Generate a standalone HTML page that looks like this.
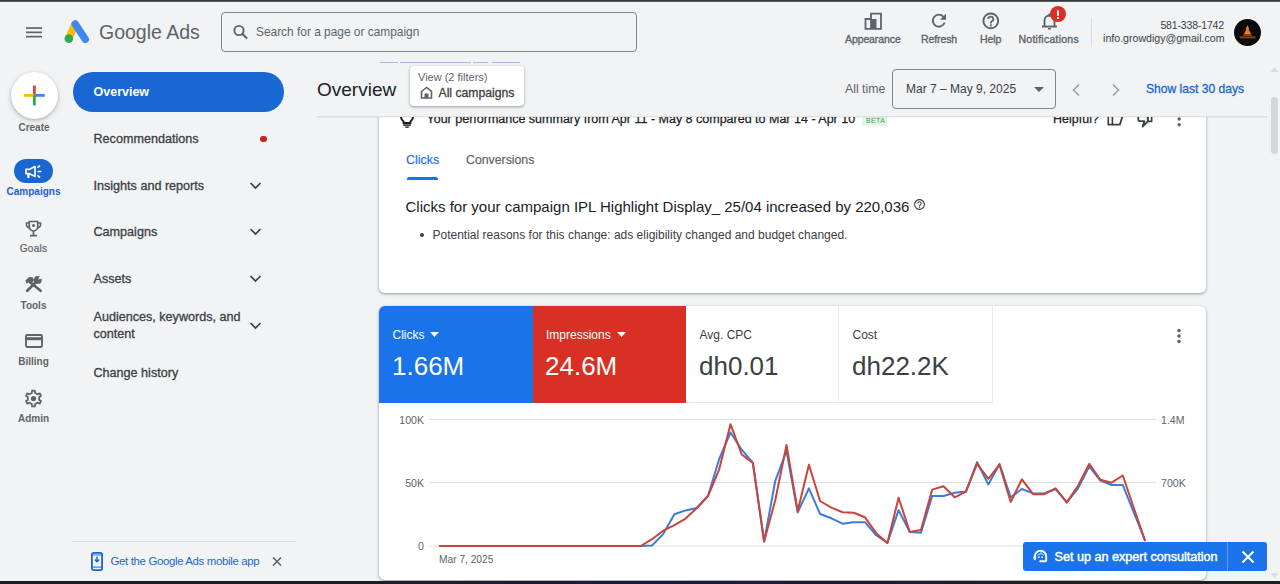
<!DOCTYPE html>
<html><head><meta charset="utf-8">
<style>
*{box-sizing:border-box;margin:0;padding:0}
html,body{width:1280px;height:584px;overflow:hidden;background:#f1f3f4;font-family:"Liberation Sans",sans-serif;color:#202124}
.abs{position:absolute}
.t{position:absolute;white-space:nowrap;line-height:1}
#topbar{position:absolute;left:0;top:0;width:1280px;height:2px;background:linear-gradient(#36373a 0,#36373a 55%,#8a8b8e 100%)}
#botbar{position:absolute;left:0;top:581px;width:1280px;height:3px;background:linear-gradient(to right,#1b1e25 0%,#1b1e28 35%,#161a3e 50%,#171b36 62%,#1c1f26 80%,#1c1f24 100%)}
.hlab{font-size:10.5px;color:#5f6368;font-weight:normal;letter-spacing:-0.1px;-webkit-text-stroke:0.35px #5f6368}
.rlab{font-size:10px;color:#5f6368;font-weight:bold;letter-spacing:0px}
.nav{font-size:12.6px;color:#3c4043;-webkit-text-stroke:0.3px #3c4043}
.card{position:absolute;background:#fff;border-radius:6px;box-shadow:0 1px 2px rgba(60,64,67,.3),0 1px 3px 1px rgba(60,64,67,.15)}
</style></head><body>
<div id="topbar"></div>

<!-- ================= HEADER ================= -->
<svg class="abs" style="left:26px;top:27px" width="16" height="11" viewBox="0 0 16 11"><rect x="0" y="0.2" width="16" height="1.7" fill="#5f6368"/><rect x="0" y="4.5" width="16" height="1.7" fill="#5f6368"/><rect x="0" y="8.8" width="16" height="1.7" fill="#5f6368"/></svg>
<svg class="abs" style="left:63px;top:19px" width="28" height="26" viewBox="0 0 28 26">
 <line x1="11.8" y1="5.5" x2="5.8" y2="19.5" stroke="#fbbc04" stroke-width="7.4" stroke-linecap="round"/>
 <line x1="12.2" y1="5" x2="22.3" y2="20.3" stroke="#4285f4" stroke-width="7.4" stroke-linecap="round"/>
 <circle cx="5.8" cy="19.6" r="4.3" fill="#34a853"/>
</svg>
<div class="t" style="left:99px;top:22.5px;font-size:19.5px;color:#5f6368">Google Ads</div>

<div class="abs" style="left:220.5px;top:12px;width:416.5px;height:39.5px;border:1px solid #80868b;border-radius:4px"></div>
<svg class="abs" style="left:232px;top:24px" width="17" height="16" viewBox="0 0 17 16"><circle cx="7" cy="6.5" r="4.6" fill="none" stroke="#5f6368" stroke-width="1.9"/><path d="M10.3 9.8L15 14.6" stroke="#5f6368" stroke-width="2.1"/></svg>
<div class="t" style="left:256px;top:26.8px;font-size:11.9px;color:#5f6368">Search for a page or campaign</div>

<!-- header actions -->
<svg class="abs" style="left:864px;top:12px" width="18" height="18" viewBox="0 0 18 18"><path fill="none" stroke="#5f6368" stroke-width="1.8" d="M1.5 7v9.9h5.5V7zM7 1.7h10v15.2H7z"/><rect x="7" y="7" width="5.5" height="9.5" fill="#5f6368"/></svg>
<div class="t hlab" style="left:845px;top:34.3px">Appearance</div>
<svg class="abs" style="left:931px;top:13px" width="16" height="15" viewBox="0 0 16 15"><path d="M12.3 3.6A6 6 0 1 0 13.6 9.5" fill="none" stroke="#5f6368" stroke-width="1.9"/><path d="M15 0.8v6H9z" fill="#5f6368"/></svg>
<div class="t hlab" style="left:921px;top:34.3px">Refresh</div>
<svg class="abs" style="left:981px;top:11px" width="20" height="20" viewBox="0 0 20 20"><circle cx="9.8" cy="9.9" r="7.4" fill="none" stroke="#5f6368" stroke-width="1.9"/><path d="M7.3 8.1a2.5 2.5 0 1 1 3.6 2.2c-.8.4-1.1.9-1.1 1.8v.3" fill="none" stroke="#5f6368" stroke-width="1.8"/><rect x="8.9" y="13.4" width="1.9" height="1.9" fill="#5f6368"/></svg>
<div class="t hlab" style="left:980px;top:34.3px">Help</div>
<svg class="abs" style="left:1041px;top:12px" width="17" height="18" viewBox="0 0 17 18"><path d="M3.5 14V8.5a5 5 0 0 1 10 0V14" fill="none" stroke="#5f6368" stroke-width="1.9"/><rect x="1" y="13.6" width="15" height="1.9" fill="#5f6368"/><rect x="6.8" y="16" width="3.4" height="1.5" rx=".7" fill="#5f6368"/><rect x="7.6" y="1.5" width="1.8" height="3" fill="#5f6368"/></svg>
<div class="abs" style="left:1050px;top:6px;width:16px;height:16px;border-radius:50%;background:#d93025"></div>
<div class="abs" style="left:1057px;top:10.3px;width:2px;height:5.4px;background:#fff;border-radius:1px"></div>
<div class="abs" style="left:1057px;top:16.9px;width:2px;height:2px;background:#fff"></div>
<div class="t hlab" style="left:1018.5px;top:34.3px;letter-spacing:0.25px">Notifications</div>
<div class="abs" style="left:1091px;top:18px;width:1px;height:29px;background:#dcdee1"></div>
<div class="t" style="left:1100px;top:20px;width:124px;text-align:right;font-size:10.5px;letter-spacing:-0.15px;color:#3c4043">581-338-1742</div>
<div class="t" style="left:1090px;top:33.2px;width:134.5px;text-align:right;font-size:10.6px;color:#3c4043">info.growdigy@gmail.com</div>
<div class="abs" style="left:1234px;top:19px;width:27px;height:27px;border-radius:50%;background:#0a0a0a"></div>
<svg class="abs" style="left:1234px;top:19px" width="27" height="27" viewBox="0 0 27 27"><path fill="#f47a20" d="M13.5 6L15.3 10.3L14.5 10.3L17.3 15.6L9.7 15.6L12.5 10.3L11.7 10.3Z"/><rect x="9" y="15.8" width="9" height="0.9" fill="#b9521c"/><rect x="6" y="17.3" width="15.5" height="2.2" fill="#d0601c" opacity=".6"/></svg>

<!-- ================= LEFT RAIL ================= -->
<div class="abs" style="left:10.5px;top:72px;width:47px;height:47px;border-radius:50%;background:#fff;box-shadow:0 1px 3px rgba(60,64,67,.3),0 2px 6px rgba(60,64,67,.15)"></div>
<svg class="abs" style="left:24px;top:85px" width="21" height="21" viewBox="0 0 21 21">
 <rect x="9" y="0.5" width="2.8" height="10" fill="#ea4335"/>
 <rect x="0" y="9" width="10.4" height="2.8" fill="#fbbc04"/>
 <rect x="10.4" y="9" width="10.4" height="2.8" fill="#4285f4"/>
 <rect x="9" y="10.4" width="2.8" height="10" fill="#34a853"/>
</svg>
<div class="t rlab" style="left:0;width:68px;text-align:center;top:122.7px;letter-spacing:0px">Create</div>

<div class="abs" style="left:13.8px;top:159.4px;width:39.5px;height:23.3px;border-radius:12px;background:#1967d2"></div>
<svg class="abs" style="left:24px;top:164px" width="19" height="15" viewBox="0 0 19 15"><path d="M2 5.3h3.6L11 2.6v9.8L5.6 9.7H2z" fill="none" stroke="#fff" stroke-width="1.7" stroke-linejoin="round"/><rect x="3.2" y="9.4" width="2.3" height="4.5" fill="#fff"/><path d="M14 3.2l1.5-1.2M14.2 7.5h2.6M14 11.8l1.5 1.2" stroke="#fff" stroke-width="1.7" stroke-linecap="round"/></svg>
<div class="t rlab" style="left:0;width:67px;text-align:center;top:187px;color:#1a5fc9">Campaigns</div>

<svg class="abs" style="left:25px;top:219.5px" width="17" height="17" viewBox="0 0 17 17"><path d="M4.3 1.5h8.4v5.3a4.2 4.2 0 0 1-8.4 0z" fill="none" stroke="#5f6368" stroke-width="1.7"/><path d="M4.3 3H1.4v1.2a3.6 3.6 0 0 0 3.2 3.6M12.7 3h2.9v1.2a3.6 3.6 0 0 1-3.2 3.6" fill="none" stroke="#5f6368" stroke-width="1.5"/><circle cx="8.5" cy="5.5" r="1.5" fill="#5f6368"/><path d="M8.5 11v4.2M5 15.6h7" stroke="#5f6368" stroke-width="1.7"/></svg>
<div class="t rlab" style="left:0;width:67px;text-align:center;top:243.9px;font-weight:normal;letter-spacing:0.3px;-webkit-text-stroke:0.2px #5f6368">Goals</div>

<svg class="abs" style="left:18px;top:270px" width="32" height="26" viewBox="0 0 32 26"><path d="M9.2 20.8L18.3 11.7" stroke="#5f6368" stroke-width="2.7" stroke-linecap="round"/><path d="M13.5 13.2L22.6 20.8" stroke="#5f6368" stroke-width="2.7" stroke-linecap="round"/><circle cx="19.8" cy="9.9" r="3.9" fill="#5f6368"/><path d="M20.2 9.5L22.2 5.2L25.2 8.2Z" fill="#f1f3f4"/><path d="M7.3 10.6L11.2 7.1L14.6 7.2L16.2 10.2L12.4 14.4L10.6 12.4L8.7 13.6Z" fill="#5f6368"/></svg>
<div class="t rlab" style="left:0;width:67px;text-align:center;top:300.5px;letter-spacing:0px">Tools</div>

<svg class="abs" style="left:24.5px;top:334px" width="18" height="14" viewBox="0 0 18 14"><rect x="1" y="1" width="16" height="12" rx="1.2" fill="none" stroke="#5f6368" stroke-width="1.9"/><rect x="1" y="3.2" width="16" height="3" fill="#5f6368"/></svg>
<div class="t rlab" style="left:0;width:67px;text-align:center;top:356.9px;letter-spacing:0px">Billing</div>

<svg class="abs" style="left:23px;top:387.5px" width="21" height="21" viewBox="0 0 24 24"><path fill="#5f6368" d="M19.43 12.98c.04-.32.07-.64.07-.98s-.03-.66-.07-.98l2.11-1.650c.19-.15.24-.42.12-.64l-2-3.46a.5.5 0 00-.61-.22l-2.49 1c-.52-.4-1.08-.73-1.69-.98l-.38-2.65A.488.488 0 0014 2h-4c-.25 0-.46.18-.49.42l-.38 2.65c-.61.25-1.17.59-1.690.98l-2.49-1a.566.566 0 00-.18-.03c-.17 0-.34.09-.43.25l-2 3.46c-.13.22-.07.49.12.64l2.11 1.65c-.04.32-.07.65-.07.98s.03.66.07.98l-2.11 1.65c-.19.15-.24.42-.12.64l2 3.46a.5.5 0 00.61.22l2.49-1c.52.4 1.08.73 1.69.98l.38 2.65c.03.24.24.42.49.42h4c.25 0 .46-.18.49-.42l.38-2.65c.61-.25 1.17-.59 1.69-.98l2.49 1c.06.02.12.03.18.03.17 0 .34-.09.43-.25l2-3.46c.12-.22.07-.49-.12-.64l-2.11-1.65zm-1.98-1.71c.04.31.05.52.05.73 0 .21-.02.43-.05.73l-.14 1.13.89.7 1.08.84-.7 1.21-1.27-.51-1.04-.42-.9.68c-.43.32-.84.56-1.25.73l-1.06.43-.16 1.13-.2 1.35h-1.4l-.19-1.35-.16-1.13-1.06-.43c-.43-.18-.83-.41-1.23-.71l-.91-.7-1.06.43-1.27.51-.7-1.21 1.08-.84.89-.7-.14-1.13c-.03-.31-.05-.54-.05-.74s.02-.43.05-.73l.14-1.13-.89-.7-1.08-.84.7-1.21 1.27.51 1.04.42.9-.68c.43-.32.84-.56 1.25-.73l1.06-.43.16-1.13.2-1.35h1.39l.19 1.35.16 1.13 1.06.43c.43.18.83.41 1.23.71l.91.7 1.06-.43 1.27-.51.7 1.21-1.07.85-.89.7.14 1.130z"/><circle cx="12" cy="12" r="3" fill="#5f6368"/></svg>
<div class="t rlab" style="left:0;width:67px;text-align:center;top:413.6px;letter-spacing:0px">Admin</div>

<!-- ================= NAV PANEL ================= -->
<div class="abs" style="left:73px;top:72px;width:211px;height:40px;border-radius:20px;background:#1967d2"></div>
<div class="t" style="left:93.5px;top:86px;font-size:12.5px;font-weight:bold;color:#fff">Overview</div>
<div class="t nav" style="left:93.5px;top:133.2px">Recommendations</div>
<div class="abs" style="left:260px;top:135.5px;width:6.5px;height:6.5px;border-radius:50%;background:#c5221f"></div>
<div class="t nav" style="left:93.5px;top:179.5px">Insights and reports</div>
<div class="t nav" style="left:93.5px;top:226.1px">Campaigns</div>
<div class="t nav" style="left:93.5px;top:273.2px">Assets</div>
<div class="t nav" style="left:93.5px;top:311.3px">Audiences, keywords, and</div>
<div class="t nav" style="left:93.5px;top:327.9px">content</div>
<div class="t nav" style="left:93.5px;top:366.6px">Change history</div>
<svg class="abs" style="left:249px;top:181px" width="13" height="9" viewBox="0 0 13 9"><path d="M1.5 2l5 5 5-5" fill="none" stroke="#3c4043" stroke-width="1.7"/></svg>
<svg class="abs" style="left:249px;top:227.3px" width="13" height="9" viewBox="0 0 13 9"><path d="M1.5 2l5 5 5-5" fill="none" stroke="#3c4043" stroke-width="1.7"/></svg>
<svg class="abs" style="left:249px;top:274.2px" width="13" height="9" viewBox="0 0 13 9"><path d="M1.5 2l5 5 5-5" fill="none" stroke="#3c4043" stroke-width="1.7"/></svg>
<svg class="abs" style="left:249px;top:320.7px" width="13" height="9" viewBox="0 0 13 9"><path d="M1.5 2l5 5 5-5" fill="none" stroke="#3c4043" stroke-width="1.7"/></svg>

<div class="abs" style="left:72px;top:541px;width:224px;height:1px;background:#dadce0"></div>
<svg class="abs" style="left:91px;top:552px" width="12" height="19" viewBox="0 0 12 19"><rect x="0.9" y="0.9" width="10.2" height="17.2" rx="1.8" fill="none" stroke="#1967d2" stroke-width="1.8"/><rect x="1" y="2.5" width="10" height="0.9" fill="#1967d2"/><rect x="1" y="14.6" width="10" height="1" fill="#1967d2"/><rect x="4" y="16" width="4" height="1" fill="#fff"/><path d="M6 4.5v5M3.8 7.5L6 9.8 8.2 7.5" fill="none" stroke="#1967d2" stroke-width="1.4"/></svg>
<div class="t" style="left:110.5px;top:555.8px;font-size:11.4px;letter-spacing:-0.33px;color:#1967d2">Get the Google Ads mobile app</div>
<svg class="abs" style="left:272px;top:557px" width="10" height="9" viewBox="0 0 10 9"><path d="M1 0.5l8 8M9 0.5l-8 8" stroke="#5f6368" stroke-width="1.6"/></svg>

<!-- ================= MAIN ================= -->
<!-- card 1 -->
<div class="card" style="left:379px;top:90px;width:827px;height:203px"></div>
<svg class="abs" style="left:399px;top:104px" width="16" height="26" viewBox="0 0 16 26"><path d="M4.6 17.5A6 6 0 1 1 11.4 17.5V19H4.6z" fill="none" stroke="#202124" stroke-width="2"/><rect x="4.2" y="20.3" width="7.6" height="1.5" fill="#202124"/><path d="M5.5 22.6h5a2.5 1.4 0 0 1-5 0z" fill="#202124"/></svg>
<div class="t" style="left:426.5px;top:113px;font-size:12.5px;color:#202124;-webkit-text-stroke:0.25px #202124">Your performance summary from Apr 11 - May 8 compared to Mar 14 - Apr 10</div>
<div class="abs" style="left:862px;top:111px;width:25px;height:14.5px;background:#e6f4ea"></div>
<div class="t" style="left:866px;top:116.5px;font-size:7px;letter-spacing:0.35px;color:#34a853">BETA</div>
<div class="t" style="left:1053px;top:113px;font-size:12.5px;color:#202124;-webkit-text-stroke:0.25px #202124">Helpful?</div>
<svg class="abs" style="left:1100px;top:104px" width="30" height="26" viewBox="0 0 30 26"><rect x="8.3" y="4" width="4.1" height="16.6" fill="none" stroke="#3c4043" stroke-width="1.7"/><path d="M12.4 20.6H19.8L22.1 13.5V4" fill="none" stroke="#3c4043" stroke-width="1.8"/></svg><svg class="abs" style="left:1130px;top:108px" width="26" height="22" viewBox="0 0 26 22"><path d="M8.3 4V12Q8.3 13.2 9.5 13.2H14.4L12.6 18.6L17.8 13.4V4" fill="none" stroke="#3c4043" stroke-width="1.8" stroke-linejoin="round"/><rect x="17.8" y="4" width="3.8" height="9.4" fill="none" stroke="#3c4043" stroke-width="1.7"/></svg><svg class="abs" style="left:1176px;top:110px" width="6" height="20" viewBox="0 0 6 20"><circle cx="3.2" cy="3.3" r="1.7" fill="#5f6368"/><circle cx="3.2" cy="9" r="1.7" fill="#5f6368"/><circle cx="3.2" cy="14.7" r="1.7" fill="#5f6368"/></svg>

<div class="t" style="left:406px;top:153.9px;font-size:12.5px;color:#1a73e8;-webkit-text-stroke:0.2px #1a73e8">Clicks</div>
<div class="abs" style="left:407px;top:177px;width:31px;height:3px;border-radius:2px 2px 0 0;background:#1a73e8"></div>
<div class="t" style="left:466px;top:153.9px;font-size:12.3px;color:#5f6368;-webkit-text-stroke:0.2px #5f6368">Conversions</div>
<div class="t" style="left:405.5px;top:199px;font-size:15px;color:#202124">Clicks for your campaign IPL Highlight Display_ 25/04 increased by 220,036</div>
<svg class="abs" style="left:913px;top:197.5px" width="13" height="13" viewBox="0 0 24 24"><path fill="#3c4043" d="M11 18h2v-2h-2v2zm1-16C6.48 2 2 6.48 2 12s4.48 10 10 10 10-4.48 10-10S17.52 2 12 2zm0 18c-4.41 0-8-3.59-8-8s3.59-8 8-8 8 3.59 8 8-3.59 8-8 8zm0-14c-2.21 0-4 1.79-4 4h2c0-1.1.9-2 2-2s2 .9 2 2c0 2-3 1.75-3 5h2c0-2.25 3-2.5 3-5 0-2.21-1.79-4-4-4z"/></svg>
<div class="abs" style="left:420px;top:232.8px;width:4px;height:4px;border-radius:50%;background:#3c4043"></div>
<div class="t" style="left:432.5px;top:229.2px;font-size:12px;color:#3c4043">Potential reasons for this change: ads eligibility changed and budget changed.</div>

<!-- sticky header -->
<div class="abs" style="left:317px;top:53px;width:951px;height:63.5px;background:#f1f3f4"></div><div class="abs" style="left:317px;top:116px;width:951px;height:1.5px;background:linear-gradient(rgba(60,64,67,.13),rgba(60,64,67,.03))"></div>
<div class="abs" style="left:380px;top:62px;width:18px;height:1px;background:#a3bde6"></div>
<div class="abs" style="left:400px;top:62px;width:71px;height:1px;background:#a3bde6"></div>
<div class="abs" style="left:473px;top:62px;width:15px;height:1px;background:#a3bde6"></div>
<div class="abs" style="left:492px;top:62px;width:28px;height:1px;background:#a3bde6"></div>
<div class="t" style="left:317px;top:80px;font-size:19px;color:#202124">Overview</div>
<div class="abs" style="left:410px;top:66px;width:114px;height:40px;background:#fff;border-radius:4px;box-shadow:0 1px 2px rgba(60,64,67,.3),0 1px 3px 1px rgba(60,64,67,.15)"></div>
<div class="t" style="left:418px;top:72.3px;font-size:11px;color:#5f6368">View (2 filters)</div>
<svg class="abs" style="left:420px;top:86px" width="13" height="13" viewBox="0 0 13 13"><path d="M1.5 5.5L6.5 1.5l5 4v6.5h-10z" fill="none" stroke="#5f6368" stroke-width="1.6"/><rect x="4.5" y="7.5" width="4" height="4.5" fill="#5f6368"/></svg>
<div class="t nav" style="left:438.5px;top:87.2px;font-size:12.2px">All campaigns</div>

<div class="t" style="left:845px;top:83.4px;font-size:12.3px;color:#5f6368">All time</div>
<div class="abs" style="left:892px;top:69px;width:164px;height:40px;border:1px solid #80868b;border-radius:4px"></div>
<div class="t" style="left:906px;top:83.4px;font-size:12px;color:#3c4043">Mar 7 – May 9, 2025</div>
<svg class="abs" style="left:1034px;top:87px" width="10" height="5" viewBox="0 0 10 5"><path d="M0 0h10L5 5z" fill="#5f6368"/></svg>
<svg class="abs" style="left:1071px;top:83px" width="10" height="14" viewBox="0 0 10 14"><path d="M8 1.5L2.5 7 8 12.5" fill="none" stroke="#9aa0a6" stroke-width="1.6"/></svg>
<svg class="abs" style="left:1111px;top:83px" width="10" height="14" viewBox="0 0 10 14"><path d="M2 1.5L7.5 7 2 12.5" fill="none" stroke="#9aa0a6" stroke-width="1.6"/></svg>
<div class="t" style="left:1146px;top:83.4px;font-size:12.1px;color:#1a67d2;-webkit-text-stroke:0.3px #1a67d2">Show last 30 days</div>

<!-- card 2 -->
<div class="card" style="left:379px;top:306px;width:827px;height:274px"></div>
<div class="abs" style="left:379px;top:306px;width:154px;height:97px;background:#1a73e8;border-top-left-radius:6px"></div>
<div class="abs" style="left:532.5px;top:306px;width:153.5px;height:97px;background:#d93025"></div>
<div class="abs" style="left:686px;top:402px;width:306px;height:1px;background:#e8eaed"></div>
<div class="abs" style="left:838px;top:306px;width:1px;height:97px;background:#e8eaed"></div>
<div class="abs" style="left:992px;top:306px;width:1px;height:97px;background:#e8eaed"></div>
<div class="t" style="left:392.5px;top:329px;font-size:12px;color:#fff">Clicks</div>
<svg class="abs" style="left:430px;top:332px" width="9" height="5" viewBox="0 0 9 5"><path d="M0 0h9L4.5 5z" fill="#fff"/></svg>
<div class="t" style="left:392px;top:353px;font-size:26px;color:#fff">1.66M</div>
<div class="t" style="left:546px;top:329px;font-size:12px;color:#fff">Impressions</div>
<svg class="abs" style="left:617px;top:332px" width="9" height="5" viewBox="0 0 9 5"><path d="M0 0h9L4.5 5z" fill="#fff"/></svg>
<div class="t" style="left:545px;top:353px;font-size:26px;color:#fff">24.6M</div>
<div class="t" style="left:699.5px;top:329px;font-size:12px;color:#3c4043">Avg. CPC</div>
<div class="t" style="left:699px;top:353px;font-size:26px;color:#3c4043">dh0.01</div>
<div class="t" style="left:852.5px;top:329px;font-size:12px;color:#3c4043">Cost</div>
<div class="t" style="left:852px;top:353px;font-size:26px;color:#3c4043">dh22.2K</div>
<svg class="abs" style="left:1176px;top:328px" width="6" height="16" viewBox="0 0 6 16"><circle cx="3" cy="2.5" r="1.8" fill="#5f6368"/><circle cx="3" cy="8" r="1.8" fill="#5f6368"/><circle cx="3" cy="13.5" r="1.8" fill="#5f6368"/></svg>

<!-- chart -->
<svg class="abs" style="left:379px;top:403px" width="827" height="178" viewBox="379 403 827 178" id="chart">
 <g stroke="#e0e0e0" stroke-width="1">
  <line x1="429" y1="419.5" x2="1156" y2="419.5"/>
  <line x1="429" y1="482.5" x2="1156" y2="482.5"/>
  <line x1="429" y1="546" x2="1156" y2="546"/>
 </g>
 <g font-family="Liberation Sans" font-size="10.6" fill="#5f6368">
  <text x="424" y="423.5" text-anchor="end">100K</text>
  <text x="424" y="486.5" text-anchor="end">50K</text>
  <text x="424" y="550" text-anchor="end">0</text>
  <text x="1161" y="423.5">1.4M</text>
  <text x="1161" y="486.5">700K</text>
  <text x="439" y="563.3" font-size="10.2">Mar 7, 2025</text>
 </g>
 <polyline fill="none" stroke="#3b7dd8" stroke-width="2" stroke-linejoin="round" points="439.0,546 450.2,546 461.4,546 472.6,546 483.8,546 495.1,546 506.3,546 517.5,546 528.7,546 539.9,546 551.1,546 562.3,546 573.5,546 584.7,546 595.9,546 607.1,546 618.4,546 629.6,546 640.8,546 652.0,545.5 663.2,534.1 674.4,514.2 685.6,510.4 696.8,508 708.0,496 719.2,459 730.5,432.5 741.7,449.7 752.9,463 764.1,541.5 775.3,480.8 786.5,451 797.7,512.5 808.9,488.4 820.1,514 831.4,518.3 842.6,523.7 853.8,522.2 865.0,522.2 876.2,535.3 887.4,543 898.6,510.1 909.8,532 921.0,532.7 932.2,496 943.5,496 954.7,492.7 965.9,491.6 977.1,462.1 988.3,484.5 999.5,463.9 1010.7,497.3 1021.9,489 1033.1,493.4 1044.3,493.4 1055.6,489 1066.8,502.4 1078.0,488.3 1089.2,466.5 1100.4,480.6 1111.6,485 1122.8,485 1134.0,513 1145.2,541"/>
 <polyline fill="none" stroke="#c9443a" stroke-width="2" stroke-linejoin="round" points="439.0,546 450.2,546 461.4,546 472.6,546 483.8,546 495.1,546 506.3,546 517.5,546 528.7,546 539.9,546 551.1,546 562.3,546 573.5,546 584.7,546 595.9,546 607.1,546 618.4,546 629.6,546 640.8,546 652.0,539.2 663.2,530.7 674.4,525.2 685.6,518.6 696.8,508 708.0,496 719.2,469.3 730.5,424.2 741.7,454.5 752.9,463 764.1,541.5 775.3,500 786.5,445 797.7,511 808.9,464.7 820.1,501 831.4,507.6 842.6,512.2 853.8,512.7 865.0,517.3 876.2,533.2 887.4,543 898.6,497.8 909.8,532 921.0,530 932.2,489.6 943.5,486.3 954.7,497.3 965.9,491.6 977.1,463.9 988.3,478.8 999.5,464.7 1010.7,502 1021.9,479.3 1033.1,494.2 1044.3,494.2 1055.6,488.3 1066.8,502.4 1078.0,485.7 1089.2,463.9 1100.4,479.8 1111.6,482.7 1122.8,475.5 1134.0,508.5 1145.2,541"/>
</svg>

<!-- consultation button -->
<div class="abs" style="left:1023px;top:542px;width:244px;height:29px;border-radius:3px;background:#1a73e8"></div>
<div class="abs" style="left:1227px;top:542px;width:1px;height:29px;background:#5e9cef"></div>
<svg class="abs" style="left:1033px;top:549px" width="15" height="14" viewBox="0 0 15 14"><path d="M1.8 10V7.5a5.7 5.7 0 0 1 11.4 0V11.2a1.1 1.1 0 0 1-1.1 1.1H7.2" fill="none" stroke="#fff" stroke-width="1.9" stroke-linecap="round"/><rect x="0.6" y="7.2" width="2.6" height="4" rx="1.1" fill="#fff"/><circle cx="5.8" cy="8.2" r=".9" fill="#fff"/><circle cx="9.2" cy="8.2" r=".9" fill="#fff"/><path d="M4.2 6.2c1.5-.2 3-1.2 3.8-2.4.8 1.2 1.8 2 2.8 2.4" fill="none" stroke="#fff" stroke-width="1.2" opacity=".6"/></svg>
<div class="t" style="left:1054.5px;top:551px;font-size:12.6px;color:#fff;-webkit-text-stroke:0.45px #fff">Set up an expert consultation</div>
<svg class="abs" style="left:1241px;top:550px" width="14" height="14" viewBox="0 0 14 14"><path d="M1.5 1.5l11 11M12.5 1.5l-11 11" stroke="#fff" stroke-width="2"/></svg>

<!-- scrollbar -->
<svg class="abs" style="left:1270px;top:66px" width="9" height="7" viewBox="0 0 9 7"><path d="M0.5 6L4.5 1 8.5 6z" fill="#dadce0"/></svg>
<div class="abs" style="left:1271px;top:97px;width:7px;height:57px;border-radius:4px;background:#d4d6d9"></div>
<svg class="abs" style="left:1270px;top:572px" width="9" height="7" viewBox="0 0 9 7"><path d="M0.5 1L4.5 6 8.5 1z" fill="#dadce0"/></svg>

<div id="botbar"></div>
</body></html>
